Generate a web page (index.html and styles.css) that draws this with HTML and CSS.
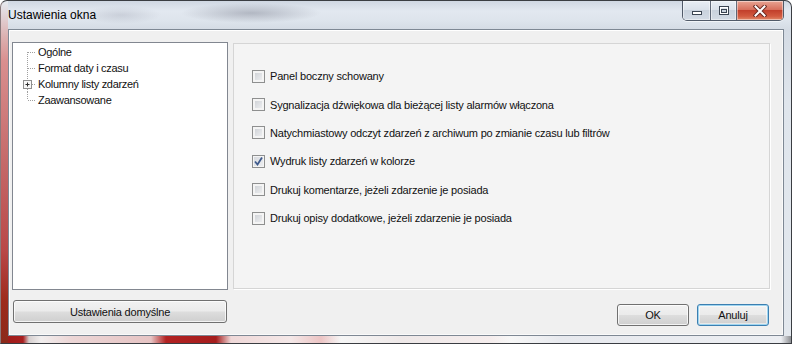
FILE: index.html
```html
<!DOCTYPE html>
<html lang="pl">
<head>
<meta charset="utf-8">
<title>Ustawienia okna</title>
<link rel="stylesheet" href="styles.css">
</head>
<body>
<div class="window">
  <div class="titlebar">
    <div class="title">Ustawienia okna</div>
    <div class="caps">
      <div class="cap cap-min">
        <svg width="12" height="10" viewBox="0 0 12 10"><rect x="1.5" y="5.5" width="9" height="3" fill="#fff" stroke="#3b4552"/></svg>
      </div>
      <div class="cap cap-max">
        <svg width="12" height="10" viewBox="0 0 12 10"><rect x="1.5" y="0.5" width="9" height="8" fill="none" stroke="#3b4552" stroke-width="1"/><rect x="2.5" y="1.5" width="7" height="6" fill="none" stroke="#fff" stroke-width="1"/><rect x="3.5" y="3.5" width="5" height="3" fill="none" stroke="#3b4552" stroke-width="1"/></svg>
      </div>
      <div class="cap cap-close">
        <svg width="14" height="12" viewBox="0 0 14 12"><path d="M2.5 1.5 L11.5 10.5 M11.5 1.5 L2.5 10.5" stroke="#6b2a22" stroke-width="4" stroke-linecap="square"/><path d="M2.5 1.5 L11.5 10.5 M11.5 1.5 L2.5 10.5" stroke="#fff" stroke-width="2" stroke-linecap="square"/></svg>
      </div>
    </div>
  </div>
  <div class="client">
    <div class="left">
      <div class="tree">
        <div class="node">
          <svg class="lines" width="24" height="16" viewBox="0 0 24 16"><path d="M14.5 8 V16 M15 8.5 H22" stroke="#a0a0a0" stroke-dasharray="1 1"/></svg>
          <span>Ogólne</span>
        </div>
        <div class="node">
          <svg class="lines" width="24" height="16" viewBox="0 0 24 16"><path d="M14.5 0 V16 M15 8.5 H22" stroke="#a0a0a0" stroke-dasharray="1 1"/></svg>
          <span>Format daty i czasu</span>
        </div>
        <div class="node">
          <svg class="lines" width="24" height="16" viewBox="0 0 24 16"><path d="M14.5 0 V4 M14.5 13 V16 M19 8.5 H22" stroke="#a0a0a0" stroke-dasharray="1 1"/><rect x="10.5" y="4.5" width="8" height="8" fill="#f7f7f7" stroke="#8f8f8f"/><path d="M12.5 8.5 H16.5 M14.5 6.5 V10.5" stroke="#2b2b2b"/></svg>
          <span>Kolumny listy zdarzeń</span>
        </div>
        <div class="node">
          <svg class="lines" width="24" height="16" viewBox="0 0 24 16"><path d="M14.5 0 V8 M15 8.5 H22" stroke="#a0a0a0" stroke-dasharray="1 1"/></svg>
          <span>Zaawansowane</span>
        </div>
      </div>
      <button class="btn btn-wide">Ustawienia domyślne</button>
    </div>
    <div class="right">
      <div class="panel">
        <label class="row"><span class="cb"></span><span>Panel boczny schowany</span></label>
        <label class="row"><span class="cb"></span><span>Sygnalizacja dźwiękowa dla bieżącej listy alarmów włączona</span></label>
        <label class="row"><span class="cb"></span><span>Natychmiastowy odczyt zdarzeń z archiwum po zmianie czasu lub filtrów</span></label>
        <label class="row"><span class="cb cb-on"><svg width="9" height="9" viewBox="0 0 9 9"><path d="M1 4.5 L3.5 7.5 L8 0.5" fill="none" stroke="#3f5a8c" stroke-width="1.8"/></svg></span><span>Wydruk listy zdarzeń w kolorze</span></label>
        <label class="row"><span class="cb"></span><span>Drukuj komentarze, jeżeli zdarzenie je posiada</span></label>
        <label class="row"><span class="cb"></span><span>Drukuj opisy dodatkowe, jeżeli zdarzenie je posiada</span></label>
      </div>
      <div class="footer">
        <button class="btn btn-std">OK</button>
        <button class="btn btn-std btn-default">Anuluj</button>
      </div>
    </div>
  </div>
</div>
</body>
</html>
```
FILE: styles.css
```css
html, body {
  margin: 0;
  padding: 0;
  width: 792px;
  height: 344px;
  overflow: hidden;
  background: #ffffff;
}

.window {
  box-sizing: border-box;
  width: 792px;
  height: 344px;
  display: flex;
  flex-direction: column;
  padding: 0 7px 7px 7px;
  border: 1px solid #3a3d42;
  border-left-color: #8a7a7c;
  border-radius: 7px 7px 0 0;
  font-family: "Liberation Sans", Arial, sans-serif;
  background:
    linear-gradient(to bottom, #e6ebf1 0px, #dcb0b0 36px, #d98f8f 60px, #c56a6a 160px, #b94848 250px, #9d2b1c 300px, #8a2a1a 344px) left top / 7px 100% no-repeat,
    linear-gradient(to right, #9c1a17 0px, #a82020 22px, #d6cfcf 28px, #f1eeee 40px, #ecd6d6 70px, #e6c4c4 150px, #b22222 165px, #a51d1d 215px, #efd8d8 230px, #f4e8e8 290px, #ecc4c4 320px, #f6f6f6 340px, #eee8e8 400px, #f5eded 490px, #f7f7f7 510px, #e7e9ee 560px, #eceef2 780px, #7a7c80 792px) left bottom / 100% 7px no-repeat,
    radial-gradient(ellipse 70px 10px at 250px 12px, rgba(120,125,140,0.45), rgba(120,125,140,0) 100%),
    radial-gradient(ellipse 40px 9px at 120px 14px, rgba(150,155,170,0.3), rgba(150,155,170,0) 100%),
    linear-gradient(to bottom, #cfd7e2 0px, #e2e8f0 10px, #dde4ec 20px, #d4dbe4 29px, #dfe5ec 100px, #e3e8ee 344px);
}

.titlebar {
  height: 28px;
  display: flex;
  align-items: flex-start;
  flex: none;
}

.title {
  padding-top: 6px;
  font-size: 12px;
  line-height: 16px;
  color: #000;
}

.caps {
  margin-left: auto;
  display: flex;
  height: 19px;
  border: 1px solid rgba(45, 55, 72, 0.8);
  border-top: none;
  border-radius: 0 0 5px 5px;
  overflow: hidden;
  box-shadow: 0 1px 0 rgba(255,255,255,0.6);
}

.cap {
  display: flex;
  align-items: center;
  justify-content: center;
  height: 19px;
  box-shadow: inset 0 0 0 1px rgba(255,255,255,0.45);
}

.cap-min {
  width: 27px;
  border-right: 1px solid rgba(45, 55, 72, 0.7);
  background: linear-gradient(to bottom, #e9eef4 0%, #dbe2ea 45%, #c9d2dd 50%, #d3dbe5 100%);
}

.cap-max {
  width: 25px;
  border-right: 1px solid rgba(45, 55, 72, 0.7);
  background: linear-gradient(to bottom, #e9eef4 0%, #dbe2ea 45%, #c9d2dd 50%, #d3dbe5 100%);
}

.cap-close {
  width: 46px;
  background: linear-gradient(to bottom, #e8a493 0%, #d7705d 45%, #c2402c 50%, #d25a3f 80%, #e08a6a 100%);
}

.client {
  flex: 1;
  display: flex;
  gap: 5px;
  padding: 12px 13px 0 3px;
  background: #f0f0f0;
  border: 1px solid #7e8894;
  box-shadow: inset 1px 1px 0 #ffffff, inset -1px -1px 0 #fafafa;
  font-size: 11px;
  letter-spacing: -0.2px;
  color: #111;
}

.left {
  width: 216px;
  display: flex;
  flex-direction: column;
  gap: 10px;
}

.tree {
  box-sizing: border-box;
  height: 248px;
  border: 1px solid #828790;
  background: #ffffff;
  padding-top: 1px;
}

.node {
  height: 16px;
  display: flex;
  align-items: center;
  white-space: nowrap;
  letter-spacing: -0.3px;
}

.lines {
  flex: none;
  display: block;
}

.node span {
  margin-left: 1px;
  line-height: 16px;
}

.btn {
  box-sizing: border-box;
  font-family: "Liberation Sans", Arial, sans-serif;
  font-size: 11px;
  letter-spacing: -0.2px;
  color: #111;
  border: 1px solid #707070;
  border-radius: 3px;
  background: linear-gradient(to bottom, #f2f2f2 0%, #ebebeb 48%, #dddddd 52%, #cfcfcf 100%);
  box-shadow: inset 0 0 0 1px rgba(255,255,255,0.75);
  padding: 0;
  margin: 0;
}

.btn-wide {
  width: 214px;
  height: 23px;
  margin-left: 1px;
}

.right {
  flex: 1;
  display: flex;
  flex-direction: column;
}

.panel {
  box-sizing: border-box;
  margin-top: 1px;
  height: 246px;
  border: 1px solid #d5d5d5;
  box-shadow: 1px 1px 0 #ffffff;
  background: #f4f4f4;
  padding: 18px 0 0 18px;
  display: flex;
  flex-direction: column;
}

.row {
  height: 28.4px;
  display: flex;
  align-items: center;
  gap: 5px;
  white-space: nowrap;
}

.cb {
  box-sizing: border-box;
  width: 13px;
  height: 13px;
  flex: none;
  border: 1px solid #8e8f8f;
  background: linear-gradient(135deg, #c9ccd1 0%, #e1e3e6 55%, #f3f3f4 100%);
  box-shadow: inset 0 0 0 2px #f4f4f4;
  display: flex;
  align-items: center;
  justify-content: center;
}

.cb-on {
  background: linear-gradient(135deg, #d6d9de 0%, #eeeff1 100%);
  box-shadow: inset 0 0 0 1px #f4f4f4;
}

.cb-on svg {
  display: block;
}

.footer {
  margin-top: 15px;
  display: flex;
  justify-content: flex-end;
  gap: 8px;
  padding-right: 1px;
}

.btn-std {
  width: 72px;
  height: 22px;
}

.btn-default {
  border-color: #3c7fb1;
  box-shadow: inset 0 0 0 1px #9fd5f0, inset 0 0 0 2px rgba(255,255,255,0.5);
}
```
